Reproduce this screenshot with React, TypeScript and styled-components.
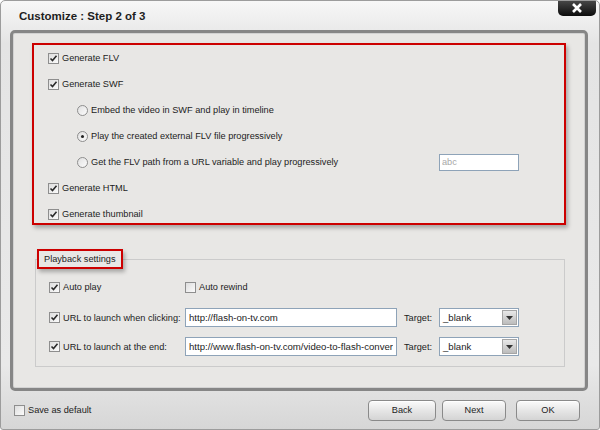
import * as React from 'react'
import styled, { createGlobalStyle } from 'styled-components'

const GlobalStyle = createGlobalStyle`
  body {
    margin: 0;
    font-family: 'Liberation Sans', Arial, sans-serif;
    background: #ffffff;
  }
`

const Check: React.FC<{ checked?: boolean }> = ({ checked }) => (
  <CheckBox>
    {checked && (
      <svg width="9" height="9" viewBox="0 0 9 9">
        <path d="M1.5 4.5 L3.5 6.5 L7.5 1.8" fill="none" stroke="#2a2a2a" strokeWidth="1.6" />
      </svg>
    )}
  </CheckBox>
)

const Radio: React.FC<{ checked?: boolean }> = ({ checked }) => (
  <RadioCircle>{checked && <RadioDot />}</RadioCircle>
)

const DropArrow = () => (
  <SelectArrow>
    <svg width="7" height="4" viewBox="0 0 7 4">
      <path d="M0 0 H7 L3.5 4 Z" fill="#333" />
    </svg>
  </SelectArrow>
)

export default function App() {
  return (
    <>
      <GlobalStyle />
      <Window>
        <TitleBar>
          <Title>Customize : Step 2 of 3</Title>
          <CloseButton>
            <svg width="12" height="10" viewBox="0 0 12 10">
              <path d="M2 1 L10 9 M10 1 L2 9" stroke="#ffffff" strokeWidth="2.6" />
            </svg>
          </CloseButton>
        </TitleBar>

        <Panel>
          <Highlight>
            <Row>
              <Check checked />
              <Label>Generate FLV</Label>
            </Row>
            <Row>
              <Check checked />
              <Label>Generate SWF</Label>
            </Row>
            <Row indent>
              <Radio />
              <Label>Embed the video in SWF and play in timeline</Label>
            </Row>
            <Row indent>
              <Radio checked />
              <Label>Play the created external FLV file progressively</Label>
            </Row>
            <Row indent>
              <Radio />
              <Label>Get the FLV path from a URL variable and play progressively</Label>
              <SmallInput readOnly value="abc" />
            </Row>
            <Row>
              <Check checked />
              <Label>Generate HTML</Label>
            </Row>
            <Row>
              <Check checked />
              <Label>Generate thumbnail</Label>
            </Row>
          </Highlight>

          <Group>
            <Legend>Playback settings</Legend>
            <PlaybackGrid>
              <Cell>
                <Check checked />
                <Label>Auto play</Label>
              </Cell>
              <Cell>
                <Check />
                <Label>Auto rewind</Label>
              </Cell>
              <span />
              <span />

              <Cell>
                <Check checked />
                <Label>URL to launch when clicking:</Label>
              </Cell>
              <TextInput readOnly value="http://flash-on-tv.com" />
              <TargetLabel>Target:</TargetLabel>
              <Select>
                <span>_blank</span>
                <DropArrow />
              </Select>

              <Cell>
                <Check checked />
                <Label>URL to launch at the end:</Label>
              </Cell>
              <TextInput readOnly value="http://www.flash-on-tv.com/video-to-flash-converter.html" />
              <TargetLabel>Target:</TargetLabel>
              <Select>
                <span>_blank</span>
                <DropArrow />
              </Select>
            </PlaybackGrid>
          </Group>
        </Panel>

        <Footer>
          <Cell>
            <Check />
            <Label>Save as default</Label>
          </Cell>
          <Buttons>
            <Button width={68}>Back</Button>
            <Button width={64}>Next</Button>
            <Button width={64} gap={10}>OK</Button>
          </Buttons>
        </Footer>
      </Window>
    </>
  )
}

const TEXT = '#1c1c1c'
const FONT_SIZE = '9.2px'

const Window = styled.div`
  width: 600px;
  height: 430px;
  box-sizing: border-box;
  display: flex;
  flex-direction: column;
  border: 1px solid #9c9c9c;
  border-radius: 5px 5px 3px 3px;
  background: linear-gradient(#f7f7f7, #e4e4e4 10%, #e9e9e9 85%, #d6d6d6);
  overflow: hidden;
`
const TitleBar = styled.div`
  height: 29px;
  flex: none;
  display: flex;
  justify-content: space-between;
  align-items: flex-start;
`
const Title = styled.div`
  margin: 9px 0 0 18px;
  font-size: 11.5px;
  font-weight: bold;
  color: #1e1e1e;
`
const CloseButton = styled.div`
  width: 38px;
  height: 16px;
  margin: -1px 3px 0 0;
  display: flex;
  align-items: center;
  justify-content: center;
  background: linear-gradient(#4a4a4a, #0c0c0c);
  border-radius: 0 0 5px 5px;
`
const Panel = styled.div`
  margin: 0 11px 0 9px;
  height: 361px;
  flex: none;
  box-sizing: border-box;
  border: 3px solid #868686;
  border-radius: 5px;
  background: #e8e7e5;
  box-shadow: inset 0 0 0 1px #d2d2d2;
  padding: 10px 0 0 19px;
`
const Highlight = styled.div`
  width: 534px;
  height: 182px;
  box-sizing: border-box;
  border: 2px solid #cc0000;
  padding: 5px 0 0 14px;
  display: flex;
  flex-direction: column;
  gap: 10px;
  box-shadow: 2px 3px 4px rgba(0, 0, 0, 0.28);
`
const Row = styled.div<{ indent?: boolean }>`
  height: 16px;
  display: flex;
  align-items: center;
  gap: 3px;
  padding-left: ${({ indent }) => (indent ? 29 : 0)}px;
`
const Cell = styled.div`
  display: flex;
  align-items: center;
  gap: 3px;
`
const Label = styled.span`
  font-size: ${FONT_SIZE};
  color: ${TEXT};
  white-space: nowrap;
`
const CheckBox = styled.span`
  width: 11px;
  height: 11px;
  box-sizing: border-box;
  flex: none;
  border: 1px solid #8e8e8e;
  background: linear-gradient(135deg, #dedede, #fbfbfb);
  display: flex;
  align-items: center;
  justify-content: center;
`
const RadioCircle = styled.span`
  width: 11px;
  height: 11px;
  box-sizing: border-box;
  flex: none;
  border: 1px solid #8e8e8e;
  border-radius: 50%;
  background: linear-gradient(135deg, #e0e0e0, #fcfcfc);
  display: flex;
  align-items: center;
  justify-content: center;
`
const RadioDot = styled.span`
  width: 3px;
  height: 3px;
  border-radius: 50%;
  background: #222;
`
const SmallInput = styled.input`
  width: 80px;
  height: 17px;
  box-sizing: border-box;
  margin: 0 45px 0 auto;
  padding: 0 2px;
  border: 1px solid #8ea3b8;
  background: #fff;
  font-family: inherit;
  font-size: ${FONT_SIZE};
  color: #a8a8a8;
  outline: none;
`
const Group = styled.fieldset`
  width: 530px;
  height: 118px;
  box-sizing: border-box;
  margin: 24px 0 0 3px;
  padding: 7px 0 0 13px;
  border: 1px solid #cbcbcb;
  min-width: 0;
`
const Legend = styled.legend`
  margin-left: -12px;
  padding: 0 5px;
  height: 20px;
  box-sizing: border-box;
  line-height: 16px;
  border: 2px solid #cc0000;
  font-size: ${FONT_SIZE};
  color: ${TEXT};
  box-shadow: 2px 3px 4px rgba(0, 0, 0, 0.28);
`
const PlaybackGrid = styled.div`
  display: grid;
  grid-template-columns: 136px 212px 42px 80px;
  grid-template-rows: 22px 19px 19px;
  row-gap: 10px;
  align-items: center;
`
const TextInput = styled.input`
  width: 212px;
  height: 19px;
  box-sizing: border-box;
  margin: 0;
  padding: 0 3px;
  border: 1px solid #8ea3b8;
  background: #fff;
  font-family: inherit;
  font-size: 9.6px;
  color: ${TEXT};
  outline: none;
`
const TargetLabel = styled.span`
  padding-left: 7px;
  font-size: ${FONT_SIZE};
  color: ${TEXT};
`
const Select = styled.div`
  width: 80px;
  height: 19px;
  box-sizing: border-box;
  border: 1px solid #8ea3b8;
  background: #fff;
  display: flex;
  align-items: center;
  justify-content: space-between;
  padding: 1px 1px 1px 3px;
  font-size: 9.6px;
  color: ${TEXT};
`
const SelectArrow = styled.span`
  width: 15px;
  height: 15px;
  box-sizing: border-box;
  border: 1px solid #a5a5a5;
  background: linear-gradient(#e8e8e8, #bcbcbc);
  display: flex;
  align-items: center;
  justify-content: center;
`
const Footer = styled.div`
  flex: 1;
  display: flex;
  align-items: center;
  padding: 0 19px 0 13px;
`
const Buttons = styled.div`
  margin-left: auto;
  display: flex;
  gap: 6px;
`
const Button = styled.button<{ width: number; gap?: number }>`
  width: ${({ width }) => width}px;
  height: 21px;
  margin-left: ${({ gap }) => (gap ? gap - 6 : 0)}px;
  padding: 0;
  border: 1px solid #8a8a8a;
  border-radius: 4px;
  background: linear-gradient(#fbfbfb, #e6e6e6 50%, #d4d4d4);
  box-shadow: inset 0 1px 0 #ffffff;
  font-family: inherit;
  font-size: ${FONT_SIZE};
  color: ${TEXT};
`
